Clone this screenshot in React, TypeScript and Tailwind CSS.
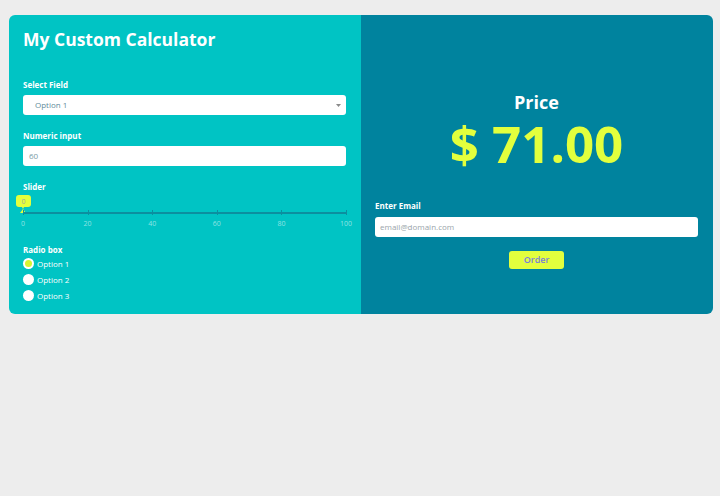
import React from "react";

const ticks = [0, 20, 40, 60, 80, 100];

export default function App() {
  return (
    <div className="min-h-[496px] w-[720px] bg-[#ededed] pt-[15px] pl-[9px]" style={{ fontFamily: '"Open Sans", "Liberation Sans", sans-serif' }}>
      <div className="flex h-[299px] w-[704px] overflow-hidden rounded-[6px]">
        {/* Left panel */}
        <div className="flex w-[352px] flex-col bg-[#00c4c4] pl-[14px] pr-[15px] pt-[11px]">
          <h1 className="text-[17.5px] font-bold leading-[26px] text-white">My Custom Calculator</h1>

          <label className="mt-[27px] text-[8px] font-bold leading-[12px] text-white">Select Field</label>
          <div className="mt-[4px] flex h-[20px] items-center justify-between rounded-[3px] bg-white pl-[12px] pr-[5px]">
            <span className="text-[8px] text-[#5f8c9a]">Option 1</span>
            <svg width="5" height="3" viewBox="0 0 5 3"><path d="M0 0 L5 0 L2.5 3 Z" fill="#8a8a8a" /></svg>
          </div>

          <label className="mt-[15px] text-[8px] font-bold leading-[12px] text-white">Numeric input</label>
          <div className="mt-[4px] flex h-[20px] items-center rounded-[3px] bg-white pl-[6px]">
            <span className="text-[8px] text-[#7a9aa5]">60</span>
          </div>

          <label className="mt-[15px] text-[8px] font-bold leading-[12px] text-white">Slider</label>
          <div className="relative mt-[2px] h-[32px]">
            {/* thumb label */}
            <div className="absolute left-[-7px] top-0 flex h-[12px] w-[15px] items-center justify-center rounded-[3px] bg-[#e3ff3d]">
              <span className="text-[7px] leading-none text-[#9aa8a0]">0</span>
            </div>
            <svg className="absolute left-[-4px] top-[11px]" width="8" height="8" viewBox="0 0 8 8">
              <path d="M2.5 0 L5.5 0 L4 3 L7 7 L1 7 L4 3 Z" fill="#e3ff3d" />
            </svg>
            {/* track */}
            <div className="absolute left-0 right-0 top-[17px] h-[1.5px] bg-[#0c8f9f]" />
            {ticks.map((t) => (
              <div key={t} className="absolute top-[15px] h-[5px] w-[1px] bg-[#0c8f9f]" style={{ left: `${t}%` }} />
            ))}
            {ticks.map((t) => (
              <span
                key={"l" + t}
                className="absolute top-[25px] -translate-x-1/2 text-[7px] leading-[8px] text-[#8fe3e3]"
                style={{ left: `${t}%` }}
              >
                {t}
              </span>
            ))}
          </div>

          <label className="mt-[17px] text-[8px] font-bold leading-[12px] text-white">Radio box</label>
          <div className="mt-[2px] flex flex-col gap-[5px]">
            {["Option 1", "Option 2", "Option 3"].map((o, i) => (
              <div key={o} className="flex h-[11px] items-center gap-[3px]">
                <div className="flex h-[11px] w-[11px] items-center justify-center rounded-full bg-white">
                  {i === 0 && <div className="h-[7px] w-[7px] rounded-full bg-[#d4f531]" />}
                </div>
                <span className="text-[8px] leading-[11px] text-white">{o}</span>
              </div>
            ))}
          </div>
        </div>

        {/* Right panel */}
        <div className="flex w-[352px] flex-col bg-[#00839e] pl-[14px] pr-[15px]">
          <div className="mt-[77px] text-center text-[18px] font-bold leading-[20px] text-white">Price</div>
          <div className="mt-[1px] text-center text-[51px] font-bold leading-[60px] text-[#e3ff3d]">$ 71.00</div>
          <label className="mt-[27px] text-[8px] font-bold leading-[12px] text-white">Enter Email</label>
          <div className="mt-[5px] flex h-[20px] items-center rounded-[3px] bg-white pl-[5px]">
            <span className="text-[8px] text-[#9aa5aa]">email@domain.com</span>
          </div>
          <div className="mt-[14px] flex justify-center">
            <button className="flex h-[18px] w-[55px] items-center justify-center rounded-[3px] bg-[#e3ff3d] text-[9px] font-semibold text-[#7a7fd8]">
              Order
            </button>
          </div>
        </div>
      </div>
    </div>
  );
}
